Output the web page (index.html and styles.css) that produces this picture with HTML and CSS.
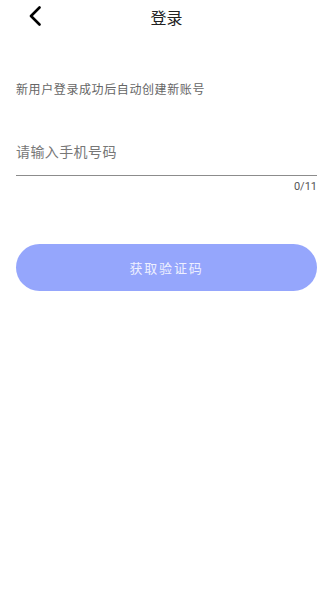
FILE: index.html
```html
<!DOCTYPE html>
<html lang="zh">
<head>
<meta charset="utf-8">
<link rel="stylesheet" href="styles.css">
</head>
<body>
<div class="page">
  <header class="nav">
    <span class="back">
      <svg width="14" height="20" viewBox="0 0 14 20"><path d="M11.5 1.5 L3 10 L11.5 18.5" fill="none" stroke="#000" stroke-width="2.6" stroke-linecap="round" stroke-linejoin="round"/></svg>
    </span>
    <h1 class="title">登录</h1>
  </header>
  <p class="hint">新用户登录成功后自动创建新账号</p>
  <div class="field">
    <div class="input">请输入手机号码</div>
  </div>
  <div class="count">0/11</div>
  <button class="btn">获取验证码</button>
</div>
</body>
</html>
```
FILE: styles.css
```css
html, body { margin: 0; padding: 0; background: #fff; }
body { font-family: "Noto Sans CJK SC", "Noto Sans", sans-serif; }
.page { padding: 0 16px; }
.nav { height: 33px; display: flex; align-items: center; justify-content: center; position: relative; }
.back { position: absolute; left: 12px; top: 6px; width: 14px; height: 20px; display: flex; }
.title { margin: 0; font-size: 16px; font-weight: 400; color: #222; }
.hint { margin: 47px 0 0; font-size: 12px; letter-spacing: 0.6px; color: #666; line-height: 17px; }
.field { margin-top: 43px; height: 35px; border-bottom: 1px solid #8c8c8c; }
.input { font-size: 14px; letter-spacing: 0.4px; color: #777; line-height: 20px; padding-top: 1px; }
.count { text-align: right; font-size: 11px; color: #555; font-family: "Roboto", sans-serif; margin-top: 4px; line-height: 14px; }
.btn { display: block; width: 100%; height: 47px; margin-top: 50px; border: none; border-radius: 24px; background: #95a6fc; color: #eef0ff; font-size: 13px; letter-spacing: 1.8px; font-family: "Noto Sans CJK SC", sans-serif; padding: 0; }
```
